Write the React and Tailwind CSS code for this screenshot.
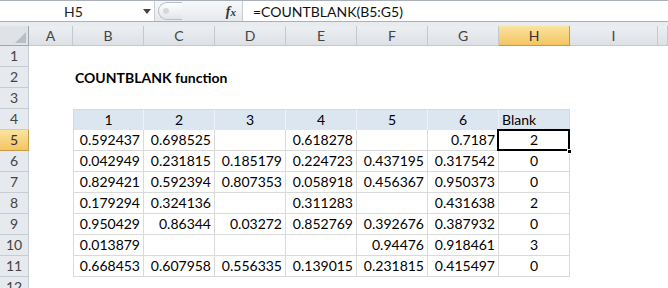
import React from "react";

const COLS = ["A", "B", "C", "D", "E", "F", "G", "H", "I", ""];

const DATA = [
  ["0.592437", "0.698525", "", "0.618278", "", "0.7187", "2"],
  ["0.042949", "0.231815", "0.185179", "0.224723", "0.437195", "0.317542", "0"],
  ["0.829421", "0.592394", "0.807353", "0.058918", "0.456367", "0.950373", "0"],
  ["0.179294", "0.324136", "", "0.311283", "", "0.431638", "2"],
  ["0.950429", "0.86344", "0.03272", "0.852769", "0.392676", "0.387932", "0"],
  ["0.013879", "", "", "", "0.94476", "0.918461", "3"],
  ["0.668453", "0.607958", "0.556335", "0.139015", "0.231815", "0.415497", "0"],
];

const gridCols = "grid-cols-[29px_44px_71px_71px_71px_71px_71px_71px_71px_88px_1fr]";

function FormulaBar() {
  return (
    <div className="flex h-[22px] border-t border-[#a9b0b8] border-b bg-white">
      <div className="w-[155px] flex items-center relative border-r border-[#c9ced4]">
        <span className="flex-1 text-center text-[14px] text-[#222] pl-[4px]">H5</span>
        <svg width="8" height="5" viewBox="0 0 8 5" className="mr-[3px]">
          <path d="M0 0h8L4 5z" fill="#444" />
        </svg>
      </div>
      <div className="w-[88px] flex items-center bg-gradient-to-b from-[#f7f8fa] to-[#e6e9ed] border-r border-[#c9ced4]">
        <div className="ml-[3px] w-[24px] h-[18px] rounded-l-full border border-r-0 border-[#b9bfc7] bg-gradient-to-b from-white to-[#e2e5ea] flex items-center pl-[4px]">
          <div className="w-[6px] h-[6px] rounded-full bg-[#d5d9de]" />
        </div>
        <span className="ml-auto mr-[6px] italic font-bold text-[14px] text-[#333]" style={{ fontFamily: '"Liberation Serif", serif' }}>
          f<span className="text-[11px]">x</span>
        </span>
      </div>
      <div className="flex-1 flex items-center pl-[10px] text-[14px] text-[#111]">=COUNTBLANK(B5:G5)</div>
    </div>
  );
}

function ColHeaders() {
  return (
    <>
      <div className="h-[20px] bg-[#dfe3e8] border-b border-r border-[#9fa7b1] relative">
        <svg width="11" height="11" viewBox="0 0 11 11" className="absolute right-[2px] bottom-[2px]">
          <path d="M11 0V11H0z" fill="#b8bec6" />
        </svg>
      </div>
      {COLS.map((c, i) =>
        c === "H" ? (
          <div key={i} className="h-[20px] flex items-center justify-center bg-gradient-to-b from-[#fbe3a0] to-[#f3c55f] border-b border-r border-[#c29a4a] text-[14px] text-[#333]">
            {c}
          </div>
        ) : (
          <div key={i} className="h-[20px] flex items-center justify-center bg-gradient-to-b from-[#eceff2] to-[#dde1e6] border-b border-r border-[#c3c9d0] text-[14px] text-[#444]">
            {c}
          </div>
        )
      )}
    </>
  );
}

function RowHeader({ n }) {
  const sel = n === 5;
  return (
    <div
      className={
        sel
          ? "h-[21px] flex items-end justify-center bg-gradient-to-b from-[#fbe3a0] to-[#f3c55f] border-b border-r border-[#c29a4a] text-[14px] text-[#333]"
          : "h-[21px] flex items-end justify-center bg-[#e6e9ee] border-b border-r border-[#c6ccd3] text-[14px] text-[#444]"
      }
    >
      {n}
    </div>
  );
}

function BlankCells({ count }) {
  return Array.from({ length: count }, (_, i) => <div key={i} className="h-[21px]" />);
}

export default function App() {
  return (
    <div className="w-[668px] h-[288px] overflow-hidden bg-white" style={{ fontFamily: "Lato, 'Open Sans', sans-serif" }}>
      <FormulaBar />
      <div className="h-[4px] bg-[#e9ecef]" />
      <div className={`grid ${gridCols}`}>
        <ColHeaders />

        <RowHeader n={1} />
        <BlankCells count={10} />

        <RowHeader n={2} />
        <div className="h-[21px]" />
        <div className="h-[21px] col-span-9 flex items-end pl-[2px] font-bold text-[14px] text-black whitespace-nowrap">
          COUNTBLANK function
        </div>

        <RowHeader n={3} />
        <BlankCells count={10} />

        {/* table header */}
        <RowHeader n={4} />
        <div className="h-[21px]" />
        {["1", "2", "3", "4", "5", "6"].map((h, i) => (
          <div
            key={i}
            className={
              (i === 0 ? "border-l border-l-[#d4d9e0] " : "") +
              "h-[21px] flex items-end justify-center bg-[#dce6f1] border-r border-r-[#eef2f8] border-t border-t-[#d4d9e0] text-[14px] text-black"
            }
          >
            {h}
          </div>
        ))}
        <div className="h-[21px] flex items-end pl-[3px] bg-[#dce6f1] border-r border-t border-[#d4d9e0] text-[14px] text-black">
          Blank
        </div>
        <BlankCells count={2} />

        {DATA.map((row, r) => (
          <React.Fragment key={r}>
            <RowHeader n={r + 5} />
            <div className="h-[21px]" />
            {row.map((v, i) => (
              <div
                key={i}
                className={
                  (i === 0 ? "border-l " : "") +
                  (i === 6 ? "justify-center " : "justify-end pr-[3px] ") +
                  (r === 0 && i === 6 ? "relative " : "") +
                  "h-[21px] flex items-end border-r border-b border-[#dadada] text-[14px] text-black"
                }
              >
                {v}
                {r === 0 && i === 6 && (
                  <>
                    <div className="absolute left-[-2px] top-[-1px] right-[-1px] bottom-[-1px] border-2 border-black pointer-events-none" />
                    <div className="absolute right-[-3px] bottom-[-4px] w-[5px] h-[5px] bg-black border border-white" />
                  </>
                )}
              </div>
            ))}
            <BlankCells count={2} />
          </React.Fragment>
        ))}

        <RowHeader n={12} />
        <BlankCells count={10} />
      </div>
    </div>
  );
}
